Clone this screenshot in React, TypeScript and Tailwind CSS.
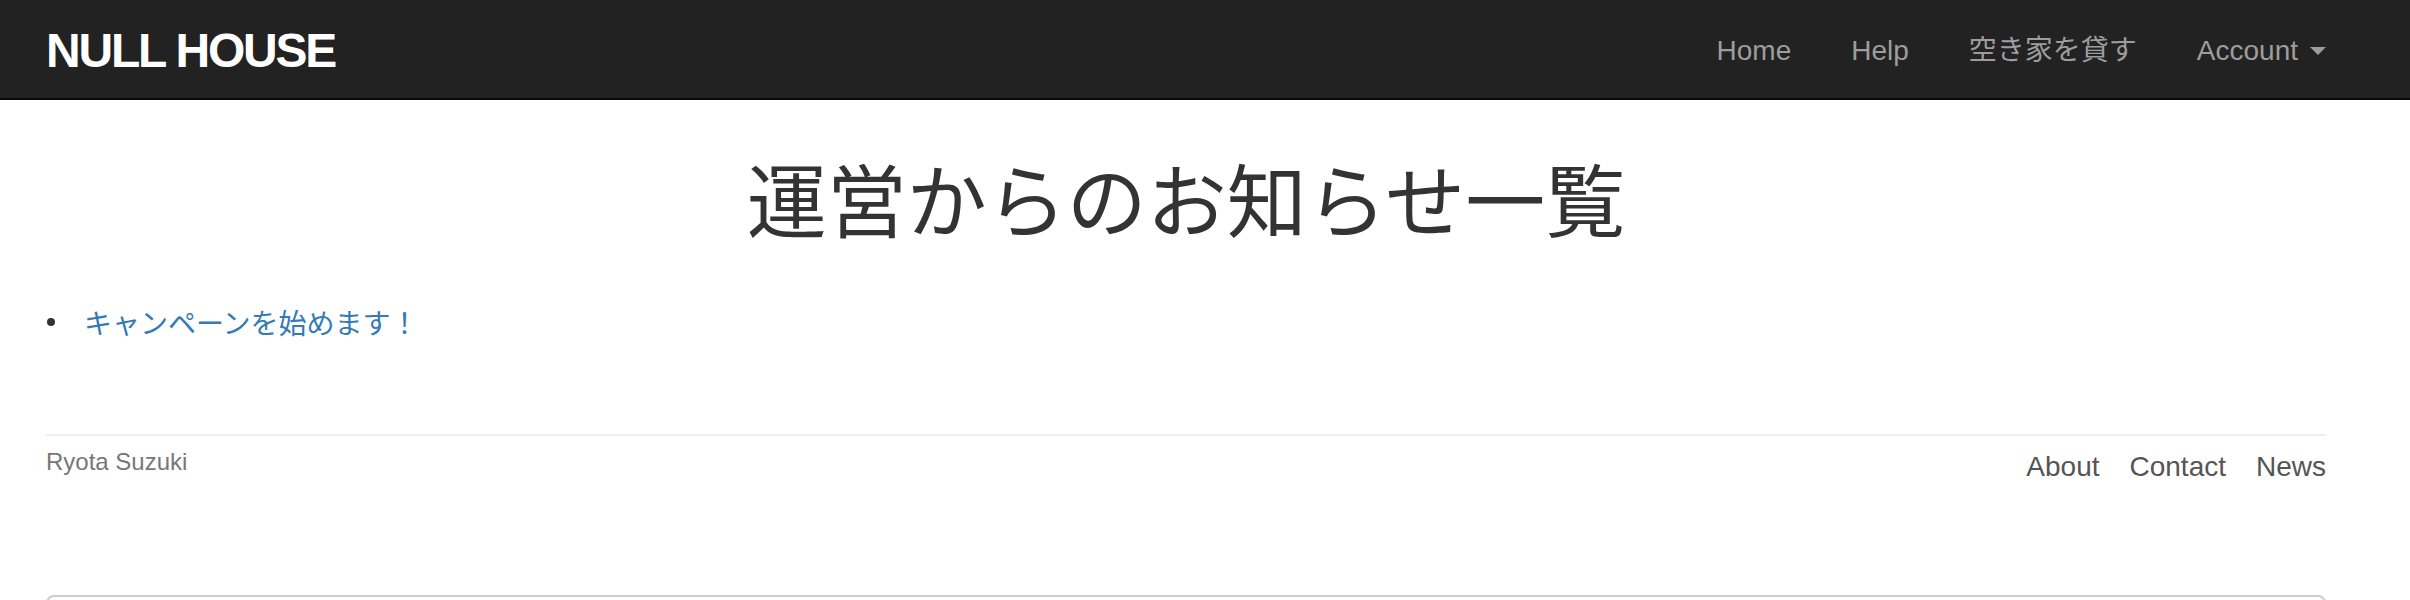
import React from 'react';

const navLinks = ['Home', 'Help', '空き家を貸す'];
const footerLinks = ['About', 'Contact', 'News'];

export default function App() {
  return (
    <div className="min-h-screen bg-white text-[#333] font-['Liberation_Sans','Noto_Sans_CJK_JP',sans-serif]">
      {/* navbar */}
      <nav className="h-[100px] bg-[#222] border-b-2 border-[#080808]">
        <div className="ml-[46px] w-[2280px] h-full flex items-center justify-between">
          <a className="text-white font-bold text-[48px] leading-none tracking-[-2.2px] pt-[4px]">NULL HOUSE</a>
          <ul className="flex items-center gap-[60px] text-[28px] leading-none text-[#9d9d9d] pt-[4px]">
            {navLinks.map((l) => (
              <li key={l}>
                <a>{l}</a>
              </li>
            ))}
            <li className="flex items-center">
              <a>Account</a>
              <span className="ml-[12px] w-0 h-0 border-l-[8px] border-r-[8px] border-t-[8px] border-l-transparent border-r-transparent border-t-[#9d9d9d]" />
            </li>
          </ul>
        </div>
      </nav>

      <div className="ml-[46px] w-[2280px]">
        <h1 className="mt-[52px] text-center text-[80px] leading-[88px] font-normal font-['Noto_Sans_CJK_JP',sans-serif] text-[#333]">
          運営からのお知らせ一覧
        </h1>

        <ul className="mt-[62px] text-[28px] leading-[40px] font-['Noto_Sans_CJK_JP',sans-serif]">
          <li className="flex items-center">
            <span className="ml-[1px] w-[8px] h-[8px] rounded-full bg-[#333] shrink-0" />
            <a className="ml-[29px] text-[#337ab7]">キャンペーンを始めます！</a>
          </li>
        </ul>

        <hr className="mt-[92px] border-0 border-t-2 border-[#eee]" />

        <footer className="pt-[14px] flex justify-between items-start">
          <p className="text-[24px] leading-none text-[#777]">Ryota Suzuki</p>
          <ul className="flex gap-[30px] text-[28px] leading-none text-[#555] pt-[3px]">
            {footerLinks.map((l) => (
              <li key={l}>
                <a>{l}</a>
              </li>
            ))}
          </ul>
        </footer>

        <div className="mt-[114px] h-[120px] border-2 border-[#ccc] rounded-lg" />
      </div>
    </div>
  );
}
